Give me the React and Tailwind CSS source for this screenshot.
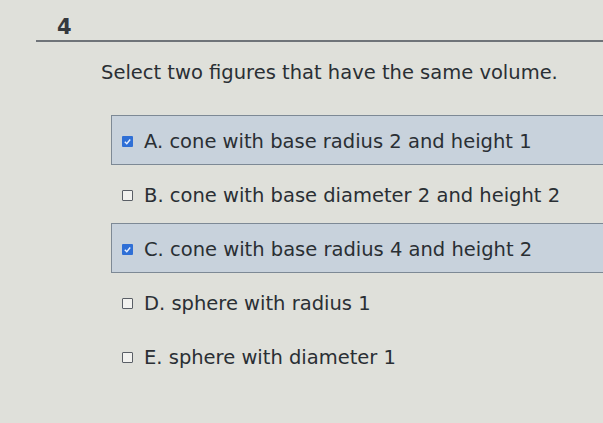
import React from "react";

const options = [
  { label: "A. cone with base radius 2 and height 1", checked: true },
  { label: "B. cone with base diameter 2 and height 2", checked: false },
  { label: "C. cone with base radius 4 and height 2", checked: true },
  { label: "D. sphere with radius 1", checked: false },
  { label: "E. sphere with diameter 1", checked: false },
];

function Box({ checked }) {
  if (checked) {
    return (
      <span className="w-[11px] h-[11px] bg-[#2f6fd6] rounded-[1px] flex items-center justify-center shrink-0">
        <svg width="9" height="9" viewBox="0 0 10 10">
          <path d="M2 5.2 L4.2 7.4 L8 2.8" fill="none" stroke="#e8f0ff" strokeWidth="1.6" />
        </svg>
      </span>
    );
  }
  return <span className="w-[11px] h-[11px] border-[1.5px] border-[#5a5f66] bg-[#f2f2ef] rounded-[1px] shrink-0" />;
}

export default function App() {
  return (
    <div
      className="w-[603px] h-[423px] bg-[#dfe0da] text-[#2a2f34] overflow-hidden"
      style={{ fontFamily: '"DejaVu Sans", Verdana, sans-serif' }}
    >
      <div className="pt-[15px] pl-[57px] text-[21px] font-bold leading-[24px] text-[#35393d]">4</div>
      <div className="ml-[36px] mt-[1px] h-[2px] bg-[#6f7479]" />
      <div className="pl-[101px] mt-[18px] text-[19.5px] leading-[26px] whitespace-nowrap">
        Select two figures that have the same volume.
      </div>
      <div className="mt-[29px] pl-[111px] flex flex-col gap-[4px]">
        {options.map((o) => (
          <div
            key={o.label}
            className={
              "h-[50px] flex items-center gap-[11px] pl-[10px] pt-[3px] text-[19.5px] whitespace-nowrap " +
              (o.checked
                ? "bg-[#c8d2dc] border border-[#7d8995] border-r-0"
                : "border border-transparent")
            }
          >
            <Box checked={o.checked} />
            <span>{o.label}</span>
          </div>
        ))}
      </div>
    </div>
  );
}
